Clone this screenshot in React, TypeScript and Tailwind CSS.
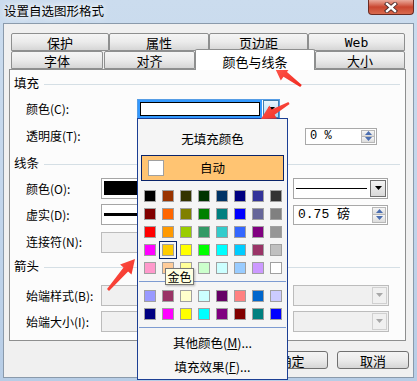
import React from "react";

const grid1 = [
  ["#000000", "#993300", "#333300", "#003300", "#003366", "#000080", "#333399", "#333333"],
  ["#800000", "#FF6600", "#808000", "#008000", "#008080", "#0000FF", "#666699", "#808080"],
  ["#FF0000", "#FF9900", "#99CC00", "#339966", "#33CCCC", "#3366FF", "#800080", "#969696"],
  ["#FF00FF", "#FFCC00", "#FFFF00", "#00FF00", "#00FFFF", "#00CCFF", "#993366", "#C0C0C0"],
  ["#FF99CC", "#FFCC99", "#FFFF99", "#CCFFCC", "#CCFFFF", "#99CCFF", "#CC99FF", "#FFFFFF"],
];
const grid2 = [
  ["#9999FF", "#993366", "#FFFFCC", "#CCFFFF", "#660066", "#FF8080", "#0066CC", "#CCCCFF"],
  ["#000080", "#FF00FF", "#FFFF00", "#00FFFF", "#800080", "#800000", "#008080", "#0000FF"],
];

function Cell({ c, sel }: { c: string; sel?: boolean }) {
  return (
    <div
      className={
        sel
          ? "w-[18px] h-[18px] flex items-center justify-center border border-[#0a246a]"
          : "w-[18px] h-[18px] flex items-center justify-center"
      }
    >
      <div className="w-[12px] h-[12px] border border-[#a0a0a0]" style={{ backgroundColor: c }} />
    </div>
  );
}

function arrowPts(tx: number, ty: number, sx: number, sy: number) {
  const L = 14, H = 7.5, w1 = 3, w0 = 1.3;
  const dx = tx - sx, dy = ty - sy;
  const len = Math.hypot(dx, dy);
  const ux = dx / len, uy = dy / len;
  const nx = -uy, ny = ux;
  const bx = tx - ux * L, by = ty - uy * L;
  const p = [
    [sx + nx * w0, sy + ny * w0],
    [bx + nx * w1, by + ny * w1],
    [bx + nx * H, by + ny * H],
    [tx, ty],
    [bx - nx * H, by - ny * H],
    [bx - nx * w1, by - ny * w1],
    [sx - nx * w0, sy - ny * w0],
  ];
  return p.map((q) => q[0].toFixed(1) + "," + q[1].toFixed(1)).join(" ");
}

function DownTri({ color = "#000" }: { color?: string }) {
  return (
    <svg width="7" height="5" viewBox="0 0 7 5">
      <polygon points="0,0 7,0 3.5,4" fill={color} />
    </svg>
  );
}

function Spin() {
  return (
    <div className="w-[15px] h-full flex flex-col py-[1px] pr-[1px]">
      <div className="flex-1 flex items-center justify-center bg-linear-to-b from-[#f6f6f6] to-[#dcdcdc] border border-[#b8b8b8]">
        <svg width="7" height="4" viewBox="0 0 7 4">
          <polygon points="0,4 7,4 3.5,0" fill="#4a6db0" />
        </svg>
      </div>
      <div className="flex-1 flex items-center justify-center bg-linear-to-b from-[#f6f6f6] to-[#dcdcdc] border border-t-0 border-[#b8b8b8]">
        <svg width="7" height="4" viewBox="0 0 7 4">
          <polygon points="0,0 7,0 3.5,4" fill="#4a6db0" />
        </svg>
      </div>
    </div>
  );
}

const tabCls =
  "h-full flex items-center justify-center border border-[#8e8f8f] rounded-t-[2px] bg-linear-to-b from-[#f5f5f5] via-[#ebebeb] to-[#d6d6d6] text-[13px]";

function Header({ t }: { t: string }) {
  return (
    <div className="flex items-center h-[20px] pl-[4px]">
      <span className="text-[12.5px]">{t}</span>
      <div className="ml-[5px] mr-[5px] mt-[2px] flex-1 h-px bg-[#d5dfe5]" />
    </div>
  );
}

function DisabledDrop({ w }: { w: string }) {
  return (
    <div className={`${w} h-[21px] border border-[#bcbcbc] bg-[#f0f0f0] flex justify-end p-[1px]`}>
      <div className="w-[15px] h-full border border-[#d0d0d0] bg-[#f0f0f0] flex items-center justify-center">
        <DownTri color="#a8a8a8" />
      </div>
    </div>
  );
}

export default function App() {
  return (
    <div className="relative w-[417px] h-[381px] overflow-hidden bg-linear-to-b from-[#cbdcee] via-[#c3d6ec] to-[#b7cde6] font-['Noto_Sans_CJK_SC',sans-serif] text-[12px] leading-none text-black select-none">
      {/* title bar */}
      <div className="flex h-[23px] items-start justify-between">
        <div className="pl-[4px] pt-[5px] text-[12.5px] [text-shadow:0_0_5px_#ffffff,0_0_9px_#ffffff]">
          设置自选图形格式
        </div>
        <div className="mr-[3px] w-[46px] h-[15px] rounded-b-[4px] border border-t-0 border-[#6b2b22] bg-linear-to-b from-[#e9a99b] via-[#c9452f] to-[#d86a4e] flex items-center justify-center">
          <svg width="14" height="11" viewBox="0 0 14 11">
            <path d="M3 2 L11 9 M11 2 L3 9" stroke="#4a2a2a" strokeWidth="4.2" strokeLinecap="square" />
            <path d="M3 2 L11 9 M11 2 L3 9" stroke="#ffffff" strokeWidth="2.4" strokeLinecap="square" />
          </svg>
        </div>
      </div>

      {/* client area */}
      <div className="mx-[3px] h-[355px] border border-[#8a9aab] bg-[#f0f0f0] px-[5px] pt-[9px]">
        {/* tabs */}
        <div className="ml-[2px] flex flex-col">
          <div className="flex h-[18px]">
            <div className={`${tabCls} w-[98px]`}>保护</div>
            <div className={`${tabCls} w-[100px]`}>属性</div>
            <div className={`${tabCls} w-[99px]`}>页边距</div>
            <div className={`${tabCls} w-[97px] font-['DejaVu_Sans_Mono',monospace] text-[11px]`}>Web</div>
          </div>
          <div className="flex h-[18px]">
            <div className={`${tabCls} w-[92px]`}>字体</div>
            <div className={`${tabCls} w-[91px] ml-[1px]`}>对齐</div>
            <div className="relative z-10 -mt-[2px] h-[21px] w-[120px] border border-b-0 border-[#8e8f8f] rounded-t-[2px] bg-white flex items-center justify-center pt-[2px] text-[13px]">
              颜色与线条
            </div>
            <div className={`${tabCls} w-[90px]`}>大小</div>
          </div>
        </div>

        {/* panel */}
        <div className="w-[397px] h-[272px] border border-[#8e8f8f] bg-[#fcfcfc] flex flex-col pt-[3px]">
          <Header t="填充" />
          {/* 颜色(C) */}
          <div className="flex items-center h-[32px] pl-[16px]">
            <div className="w-[111px]">颜色(C):</div>
            <div className="w-[143px] h-[20px] border border-[#569de5] bg-white flex">
              <div className="flex-1 bg-[#3399ff] p-[2px]">
                <div className="w-full h-full bg-white border border-black" />
              </div>
              <div className="w-[16px] ml-[1px] border border-[#3c7fb1] bg-linear-to-b from-[#eaf6fd] to-[#a7d9f5] flex items-center justify-center">
                <DownTri />
              </div>
            </div>
          </div>
          {/* 透明度 */}
          <div className="flex items-center h-[22px] pl-[16px]">
            <div className="w-[279px]">透明度(T):</div>
            <div className="w-[72px] h-[17px] border border-[#a9a9a9] bg-white flex items-center">
              <div className="flex-1 pl-[4px] font-['Liberation_Mono',monospace] text-[12px]">0 %</div>
              <Spin />
            </div>
          </div>
          <div className="h-[6px]" />
          <Header t="线条" />
          <div className="h-[3px]" />
          {/* 颜色(O) */}
          <div className="flex items-center h-[25px] pl-[16px]">
            <div className="w-[75px]">颜色(O):</div>
            <div className="w-[120px] h-[21px] border border-[#a5a5a5] bg-white pt-[2px] pb-[3px] px-[2px]">
              <div className="h-full bg-black" />
            </div>
            <div className="ml-[72px] w-[95px] h-[21px] border border-[#a5a5a5] bg-white flex">
              <div className="flex-1 flex items-center pl-[2px] pr-[2px]">
                <div className="w-full h-px bg-black" />
              </div>
              <div className="w-[16px] m-[1px] border border-[#707070] bg-linear-to-b from-[#f4f4f4] to-[#d9d9d9] flex items-center justify-center">
                <DownTri />
              </div>
            </div>
          </div>
          {/* 虚实 */}
          <div className="flex items-center h-[27px] pl-[16px]">
            <div className="w-[75px]">虚实(D):</div>
            <div className="w-[120px] h-[21px] border border-[#a5a5a5] bg-white flex items-center pl-[2px]">
              <div className="w-full h-[3px] bg-black" />
            </div>
            <div className="ml-[72px] w-[95px] h-[20px] border border-[#a9a9a9] bg-white flex items-center">
              <div className="flex-1 pl-[4px] text-[13px] font-['Liberation_Mono','Noto_Sans_CJK_SC',monospace]">0.75 磅</div>
              <Spin />
            </div>
          </div>
          {/* 连接符 */}
          <div className="flex items-center h-[28px] pl-[16px]">
            <div className="w-[75px]">连接符(N):</div>
            <div className="w-[120px] h-[21px] border border-[#bcbcbc] bg-[#f0f0f0]" />
          </div>
          <Header t="箭头" />
          <div className="h-[6px]" />
          {/* 始端样式 */}
          <div className="flex items-center h-[27px] pl-[16px]">
            <div className="w-[75px]">始端样式(B):</div>
            <DisabledDrop w="w-[120px]" />
            <div className="ml-[72px]">
              <DisabledDrop w="w-[96px]" />
            </div>
          </div>
          {/* 始端大小 */}
          <div className="flex items-center h-[25px] pl-[16px]">
            <div className="w-[75px]">始端大小(I):</div>
            <DisabledDrop w="w-[120px]" />
            <div className="ml-[72px]">
              <DisabledDrop w="w-[96px]" />
            </div>
          </div>
        </div>

        {/* buttons */}
        <div className="mt-[10px] -mr-[1px] flex justify-end gap-[9px]">
          <div className="w-[73px] h-[18px] rounded-[3px] border border-[#707070] bg-linear-to-b from-[#f4f4f4] via-[#ebebeb] to-[#d6d6d6] flex items-center justify-center text-[13px]">
            确定
          </div>
          <div className="w-[72px] h-[18px] rounded-[3px] border border-[#707070] bg-linear-to-b from-[#f4f4f4] via-[#ebebeb] to-[#d6d6d6] flex items-center justify-center text-[13px]">
            取消
          </div>
        </div>
      </div>

      {/* dropdown popup */}
      <div className="absolute left-[137px] top-[118px] w-[151px] h-[262px] border border-[#1c3f94] bg-[#f5f5f5] flex flex-col">
        <div className="mt-[4px] h-[32px] flex items-center justify-center text-[12.5px]">无填充颜色</div>
        <div className="mx-[3px] h-[26px] border border-[#0a246a] bg-[#ffc472] flex items-center">
          <div className="ml-[6px] w-[16px] h-[16px] bg-white border border-[#a0a0a0]" />
          <div className="flex-1 text-center pr-[22px] text-[12.5px]">自动</div>
        </div>
        <div className="mt-[6px] ml-[3px] grid grid-cols-[repeat(8,18px)]">
          {grid1.map((row, r) =>
            row.map((c, i) => <Cell key={r + "-" + i} c={c} sel={r === 3 && i === 1} />)
          )}
        </div>
        <div className="mt-[4px] mx-[1px] h-px bg-[#7d9bd1]" />
        <div className="mt-[5px] ml-[3px] grid grid-cols-[repeat(8,18px)]">
          {grid2.map((row, r) => row.map((c, i) => <Cell key={"b" + r + "-" + i} c={c} />))}
        </div>
        <div className="mt-[4px] mx-[1px] h-px bg-[#7d9bd1]" />
        <div className="mt-[3px] h-[24px] flex items-center justify-center text-[12.5px]">
          其他颜色(<span className="underline">M</span>)...
        </div>
        <div className="h-[24px] flex items-center justify-center text-[12.5px]">
          填充效果(<span className="underline">F</span>)...
        </div>
      </div>

      {/* tooltip */}
      <div className="absolute left-[165px] top-[268px] w-[29px] h-[17px] border border-[#767676] bg-[#ffffe1] flex items-center justify-center text-[12px] shadow-[1px_1px_2px_rgba(0,0,0,0.25)]">
        金色
      </div>

      {/* red arrows */}
      <svg className="absolute left-0 top-0 pointer-events-none" width="417" height="381" viewBox="0 0 417 381">
        <defs>
          <linearGradient id="rg" x1="0" y1="0" x2="1" y2="1">
            <stop offset="0" stopColor="#ff5a4f" />
            <stop offset="1" stopColor="#f0281e" />
          </linearGradient>
        </defs>
        <polygon points={arrowPts(274, 66, 301, 86)} fill="url(#rg)" />
        <polygon points={arrowPts(261, 119, 289, 103)} fill="url(#rg)" />
        <polygon points={arrowPts(135, 259, 108, 290)} fill="url(#rg)" />
      </svg>
    </div>
  );
}
